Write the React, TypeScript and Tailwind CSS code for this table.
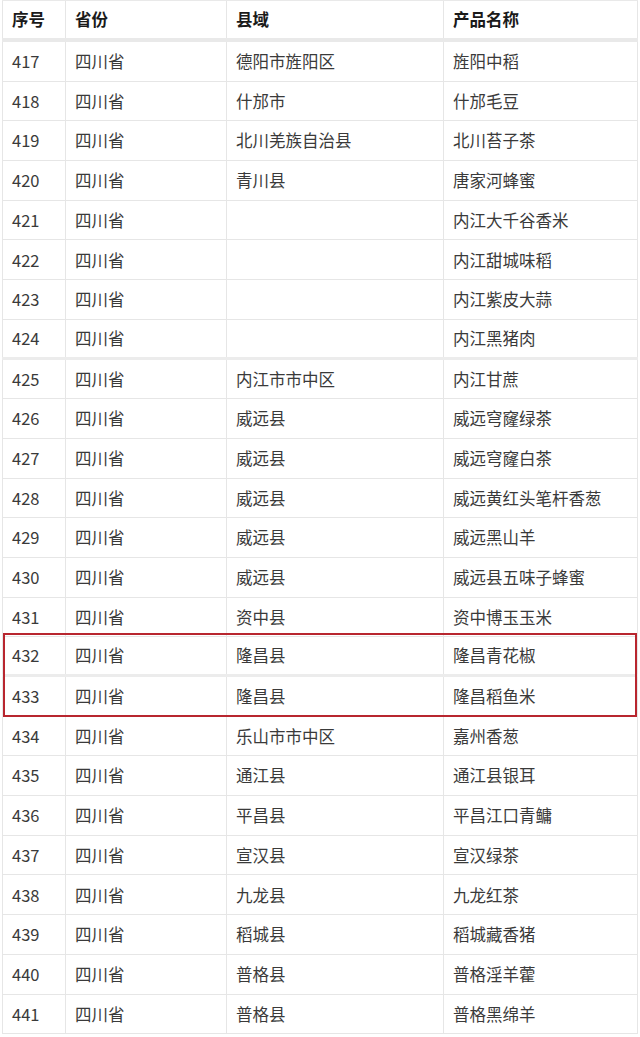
import React from "react";

type Row = [string, string, string, string];

const rowsA: Row[] = [
  ["417", "四川省", "德阳市旌阳区", "旌阳中稻"],
  ["418", "四川省", "什邡市", "什邡毛豆"],
  ["419", "四川省", "北川羌族自治县", "北川苔子茶"],
  ["420", "四川省", "青川县", "唐家河蜂蜜"],
  ["421", "四川省", "", "内江大千谷香米"],
  ["422", "四川省", "", "内江甜城味稻"],
  ["423", "四川省", "", "内江紫皮大蒜"],
  ["424", "四川省", "", "内江黑猪肉"],
];

const rowsB: Row[] = [
  ["425", "四川省", "内江市市中区", "内江甘蔗"],
  ["426", "四川省", "威远县", "威远穹窿绿茶"],
  ["427", "四川省", "威远县", "威远穹窿白茶"],
  ["428", "四川省", "威远县", "威远黄红头笔杆香葱"],
  ["429", "四川省", "威远县", "威远黑山羊"],
  ["430", "四川省", "威远县", "威远县五味子蜂蜜"],
  ["431", "四川省", "资中县", "资中博玉玉米"],
];

const rowsRed: Row[] = [
  ["432", "四川省", "隆昌县", "隆昌青花椒"],
  ["433", "四川省", "隆昌县", "隆昌稻鱼米"],
];

const rowsC: Row[] = [
  ["434", "四川省", "乐山市市中区", "嘉州香葱"],
  ["435", "四川省", "通江县", "通江县银耳"],
  ["436", "四川省", "平昌县", "平昌江口青鳙"],
  ["437", "四川省", "宣汉县", "宣汉绿茶"],
  ["438", "四川省", "九龙县", "九龙红茶"],
  ["439", "四川省", "稻城县", "稻城藏香猪"],
  ["440", "四川省", "普格县", "普格淫羊藿"],
  ["441", "四川省", "普格县", "普格黑绵羊"],
];

function Cells({ r, bold }: { r: Row; bold?: boolean }) {
  const base = "flex items-center pl-[9px] border-r border-[#e6e6e6]";
  const txt = bold ? "font-bold text-[#1a1a1a]" : "text-[#3a3a3a]";
  return (
    <>
      <div className={`${base} border-l ${txt}`}>{r[0]}</div>
      <div className={`${base} ${txt}`}>{r[1]}</div>
      <div className={`${base} ${txt}`}>{r[2]}</div>
      <div className={`${base} ${txt}`}>{r[3]}</div>
    </>
  );
}

const grid = "grid grid-cols-[64px_161px_217px_194px]";

function TRow({ r, thick }: { r: Row; thick?: boolean }) {
  return (
    <div
      className={`${grid} h-[39.7px] ${
        thick ? "border-b-[3px] border-[#ececec]" : "border-b border-[#e6e6e6]"
      }`}
    >
      <Cells r={r} />
    </div>
  );
}

export default function App() {
  return (
    <div
      className="w-[640px] h-[1037px] overflow-hidden bg-white text-[16.5px] leading-none pl-[2px]"
      style={{ fontFamily: '"Noto Sans CJK SC", "Noto Sans", sans-serif' }}
    >
      <div className="w-[636px]">
        <div className={`${grid} h-[42px] border-t border-b-[4px] border-[#e9e9e9]`}>
          <Cells r={["序号", "省份", "县域", "产品名称"]} bold />
        </div>
        {rowsA.map((r, i) => (
          <TRow key={r[0]} r={r} thick={i === rowsA.length - 1} />
        ))}
        {rowsB.map((r) => (
          <TRow key={r[0]} r={r} />
        ))}
        <div className="relative">
          {rowsRed.map((r, i) => (
            <TRow key={r[0]} r={r} thick={i === 0} />
          ))}
          <div className="absolute left-[1px] right-[1px] top-[-4px] bottom-[0px] border-2 border-[#b8262f] pointer-events-none" />
        </div>
        {rowsC.map((r) => (
          <TRow key={r[0]} r={r} />
        ))}
      </div>
    </div>
  );
}
